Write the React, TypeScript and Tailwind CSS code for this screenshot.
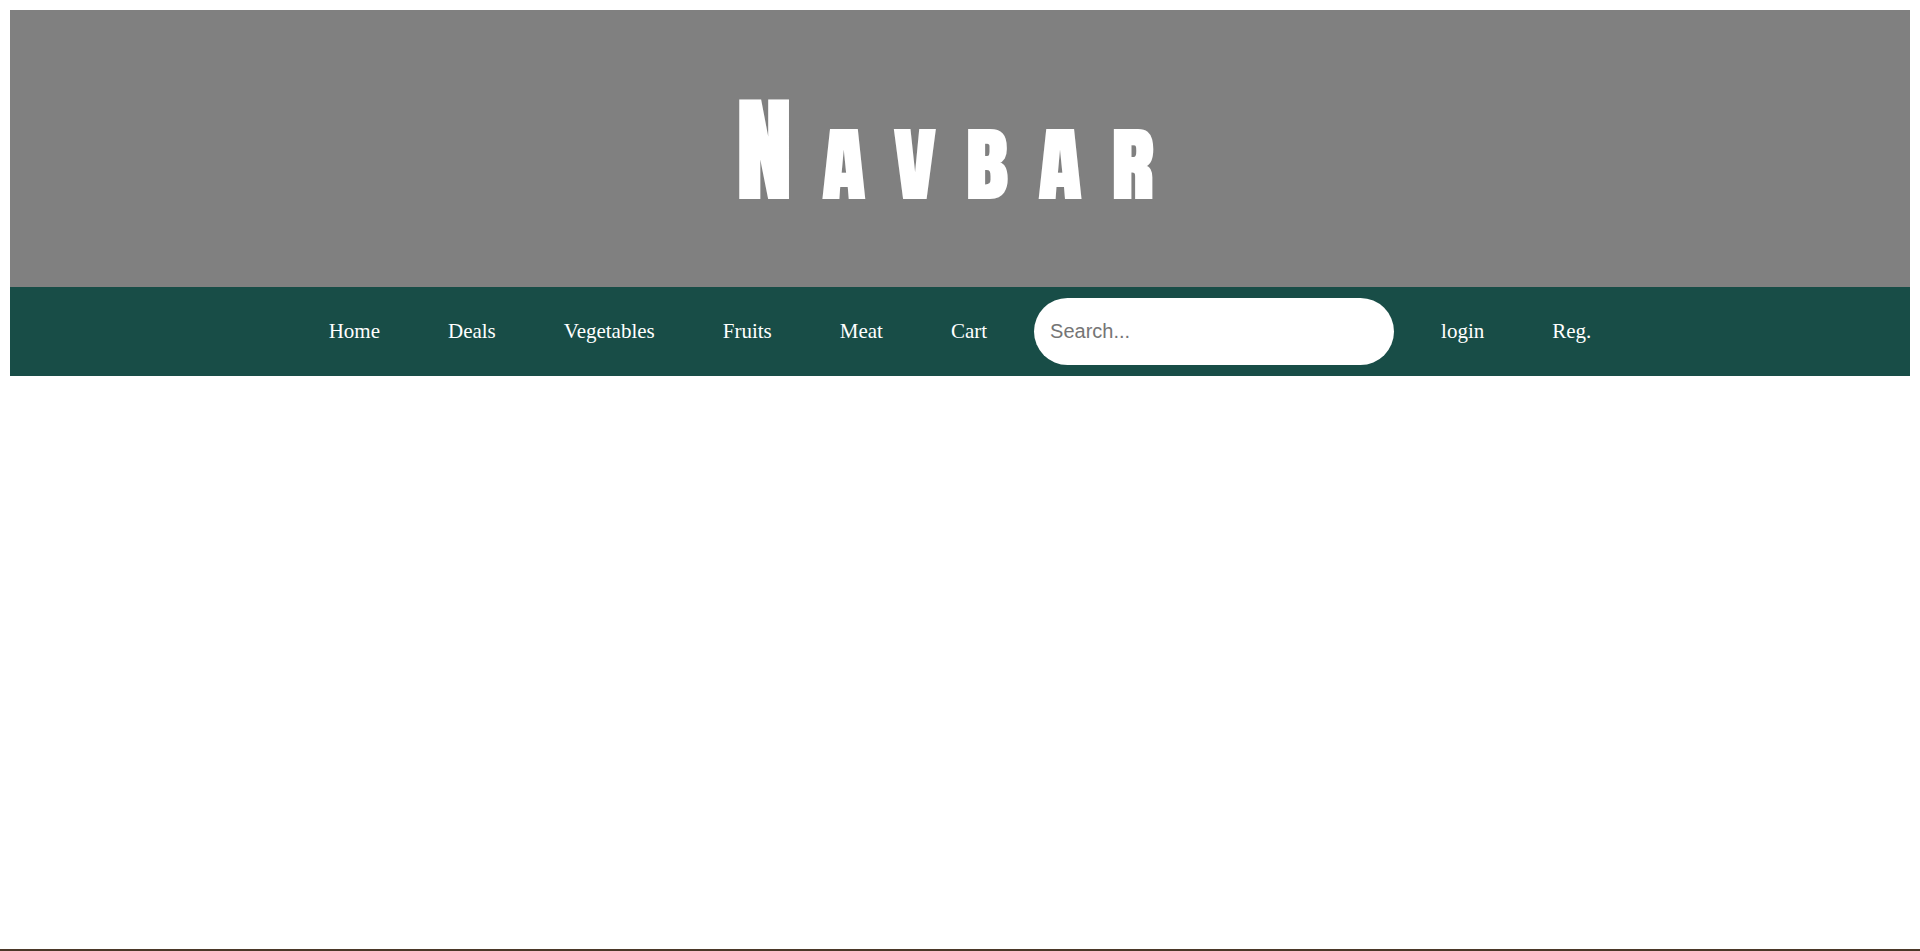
const mainLinks = ["Home", "Deals", "Vegetables", "Fruits", "Meat", "Cart"];
const accountLinks = ["login", "Reg."];

function NavLink({ label }: { label: string }) {
  return (
    <a href="#" className="px-[31px] pb-[2px] text-[21px] leading-6 text-white">
      {label}
    </a>
  );
}

export default function App() {
  return (
    <div className="flex min-h-screen flex-col justify-between bg-white font-['Liberation_Serif',serif]">
      <div className="px-[10px] pt-[10px]">
        <header className="flex h-[277px] items-center justify-center bg-[#808080] pt-1">
          <h1 className="font-[Anton,Impact,'Open_Sans',sans-serif] text-[89px] leading-none font-normal tracking-[30px] text-white [-webkit-text-stroke:2px_white] [font-variant-caps:small-caps] first-letter:text-[113px]">
            Navbar
          </h1>
        </header>
        <nav className="flex items-center justify-center gap-[6px] bg-[#184d47] py-[11px]">
          {mainLinks.map((label) => (
            <NavLink key={label} label={label} />
          ))}
          <input
            type="search"
            aria-label="Search"
            placeholder="Search..."
            className="mx-[10px] h-[67px] w-[360px] rounded-full bg-white px-4 font-['Liberation_Sans',sans-serif] text-[20px] text-black placeholder:text-[#757575]"
          />
          {accountLinks.map((label) => (
            <NavLink key={label} label={label} />
          ))}
        </nav>
      </div>
      <footer className="h-[2px] bg-[#4b3828]" />
    </div>
  );
}
